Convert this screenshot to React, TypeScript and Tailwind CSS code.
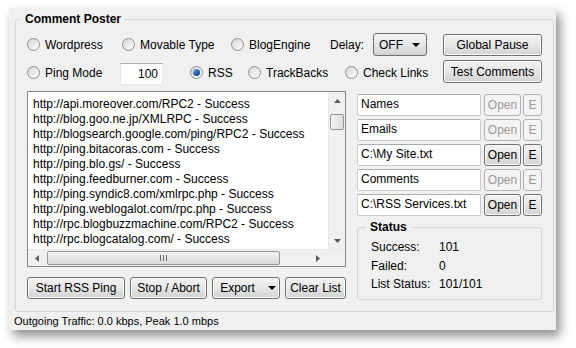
import React from 'react';

type RadioProps = { label: string; checked?: boolean; className?: string };

const Radio: React.FC<RadioProps> = ({ label, checked = false, className = '' }) => (
    <div className={`flex items-center gap-[5px] shrink-0 ${className}`}>
        <span className="w-[13px] h-[13px] rounded-full border border-[#8e8f8f] bg-gradient-to-br from-[#d6d6d6] to-[#fcfcfc] flex items-center justify-center shrink-0">
            {checked && <span className="w-[7px] h-[7px] rounded-full bg-gradient-to-br from-[#7fb8ec] via-[#2a6cb5] to-[#0b3a74]" />}
        </span>
        <span>{label}</span>
    </div>
);

type BtnProps = { children: React.ReactNode; className?: string; disabled?: boolean };

const Btn: React.FC<BtnProps> = ({ children, className = '', disabled = false }) => (
    <div
        className={`flex items-center justify-center rounded-[3px] border shrink-0 ${
            disabled
                ? 'border-[#adb2b5] bg-[#f4f4f4] text-[#9a9a9a]'
                : 'border-[#707070] bg-gradient-to-b from-[#f3f3f3] via-[#e6e6e6] to-[#d2d2d2] text-black shadow-[inset_0_0_0_1px_#fbfbfb]'
        } ${className}`}
    >
        {children}
    </div>
);

const Field: React.FC<{ text: string }> = ({ text }) => (
    <div className="w-[124px] h-[22px] bg-white border border-[#c9cdd2] border-t-[#abadb3] rounded-[2px] pl-[3px] leading-[18px]">
        {text}
    </div>
);

const files = [
    { text: 'Names', enabled: false },
    { text: 'Emails', enabled: false },
    { text: 'C:\\My Site.txt', enabled: true },
    { text: 'Comments', enabled: false },
    { text: 'C:\\RSS Services.txt', enabled: true },
];

const pings = [
    'http://api.moreover.com/RPC2 - Success',
    'http://blog.goo.ne.jp/XMLRPC - Success',
    'http://blogsearch.google.com/ping/RPC2 - Success',
    'http://ping.bitacoras.com - Success',
    'http://ping.blo.gs/ - Success',
    'http://ping.feedburner.com - Success',
    'http://ping.syndic8.com/xmlrpc.php - Success',
    'http://ping.weblogalot.com/rpc.php - Success',
    'http://rpc.blogbuzzmachine.com/RPC2 - Success',
    'http://rpc.blogcatalog.com/ - Success',
];

const Arrow: React.FC<{ dir: 'up' | 'down' | 'left' | 'right' }> = ({ dir }) => {
    const pts = {
        up: '0,4 7,4 3.5,0',
        down: '0,0 7,0 3.5,4',
        left: '4,0 4,7 0,3.5',
        right: '0,0 0,7 4,3.5',
    }[dir];
    const vertical = dir === 'up' || dir === 'down';
    return (
        <svg width={vertical ? 7 : 4} height={vertical ? 4 : 7} viewBox={vertical ? '0 0 7 4' : '0 0 4 7'}>
            <polygon points={pts} fill="#5a5a5a" />
        </svg>
    );
};

const App: React.FC = () => {
    return (
        <div className="w-[576px] h-[348px] bg-white pt-[8px] pl-[9px] font-['Liberation_Sans',Arial,sans-serif] text-[12px] text-black overflow-hidden">
            <div className="w-[547px] h-[322px] bg-[#f0f0f0] shadow-[4px_6px_10px_rgba(0,0,0,0.45)] flex flex-col">
                <fieldset className="ml-[6px] mt-[4px] w-[538px] h-[300px] border border-[#d5d5d5] rounded-[3px] px-[11px] pt-[6px]">
                    <legend className="ml-[-6px] px-[4px] font-bold leading-[15px]">Comment Poster</legend>

                    {/* row 1 */}
                    <div className="flex items-center h-[23px]">
                        <Radio label="Wordpress" className="w-[95px]" />
                        <Radio label="Movable Type" className="w-[109px]" />
                        <Radio label="BlogEngine" className="w-[99px]" />
                        <span className="w-[43px]">Delay:</span>
                        <div className="w-[54px] h-[23px] shrink-0 rounded-[3px] border border-[#707070] bg-gradient-to-b from-[#f3f3f3] via-[#e6e6e6] to-[#d2d2d2] flex items-center justify-between pl-[5px] pr-[6px]">
                            <span>OFF</span>
                            <svg width="8" height="4" viewBox="0 0 8 4"><polygon points="0,0 8,0 4,4" fill="#000" /></svg>
                        </div>
                        <Btn className="ml-auto w-[99px] h-[22px]">Global Pause</Btn>
                    </div>

                    {/* row 2 */}
                    <div className="flex items-center h-[25px] mt-[4px]">
                        <Radio label="Ping Mode" className="w-[93px]" />
                        <div className="w-[43px] h-[22px] mt-[3px] bg-white border border-[#e3e9ef] border-t-[#abadb3] text-right pr-[4px] leading-[20px]">100</div>
                        <Radio label="RSS" checked className="ml-[27px] w-[58px]" />
                        <Radio label="TrackBacks" className="w-[97px]" />
                        <Radio label="Check Links" />
                        <Btn className="ml-auto w-[99px] h-[23px] -mt-[2px]">Test Comments</Btn>
                    </div>

                    <div className="flex gap-[11px] mt-[6px]">
                        {/* left column */}
                        <div className="w-[319px] flex flex-col">
                            <div className="h-[176px] bg-white border border-[#828790] flex flex-col">
                                <div className="flex flex-1 min-h-0">
                                    <div className="flex-1 pl-[5px] pt-[5px] overflow-hidden whitespace-nowrap leading-[15px]">
                                        {pings.map(p => (
                                            <div key={p}>{p}</div>
                                        ))}
                                    </div>
                                    <div className="w-[17px] bg-[#f0f0f0] border-l border-[#e8e8e8] flex flex-col items-center">
                                        <div className="h-[17px] flex items-center justify-center"><Arrow dir="up" /></div>
                                        <div className="w-[14px] h-[16px] mt-[5px] rounded-[2px] border border-[#979797] bg-gradient-to-r from-[#f3f3f3] to-[#dcdcdc]" />
                                        <div className="mt-auto h-[17px] flex items-center justify-center"><Arrow dir="down" /></div>
                                    </div>
                                </div>
                                <div className="h-[17px] flex bg-[#f0f0f0] border-t border-[#e8e8e8]">
                                    <div className="w-[17px] flex items-center justify-center"><Arrow dir="left" /></div>
                                    <div className="flex-1 flex items-center pr-[2px]">
                                        <div className="ml-[2px] w-[233px] h-[14px] rounded-[2px] border border-[#979797] bg-gradient-to-b from-[#f3f3f3] to-[#d9d9d9] flex items-center justify-center gap-[2px]">
                                            <span className="w-[1px] h-[6px] bg-[#6a6a6a]" />
                                            <span className="w-[1px] h-[6px] bg-[#6a6a6a]" />
                                            <span className="w-[1px] h-[6px] bg-[#6a6a6a]" />
                                        </div>
                                        <div className="ml-auto w-[17px] flex items-center justify-center"><Arrow dir="right" /></div>
                                    </div>
                                    <div className="w-[17px] bg-[#f0f0f0]" />
                                </div>
                            </div>
                            <div className="flex gap-[5px] mt-[10px]">
                                <Btn className="w-[98px] h-[22px]">Start RSS Ping</Btn>
                                <Btn className="w-[77px] h-[22px]">Stop / Abort</Btn>
                                <Btn className="w-[68px] h-[22px] gap-[13px] pl-[4px]">
                                    <span>Export</span>
                                    <svg width="8" height="4" viewBox="0 0 8 4"><polygon points="0,0 8,0 4,4" fill="#000" /></svg>
                                </Btn>
                                <Btn className="w-[61px] h-[22px]">Clear List</Btn>
                            </div>
                        </div>

                        {/* right column */}
                        <div className="w-[185px] flex flex-col pt-[3px]">
                            <div className="flex flex-col gap-[3px]">
                                {files.map(f => (
                                    <div key={f.text} className="flex items-center gap-[2px]">
                                        <Field text={f.text} />
                                        <Btn disabled={!f.enabled} className="w-[37px] h-[22px] ml-[1px]">Open</Btn>
                                        <Btn disabled={!f.enabled} className="w-[19px] h-[22px]">E</Btn>
                                    </div>
                                ))}
                            </div>
                            <fieldset className="mt-[4px] h-[80px] border border-[#d5d5d5] rounded-[3px] pl-[13px] pt-[3px]">
                                <legend className="ml-[-5px] px-[4px] font-bold leading-[15px]">Status</legend>
                                <div className="grid grid-cols-[68px_1fr] leading-[18.5px]">
                                    <span>Success:</span><span>101</span>
                                    <span>Failed:</span><span>0</span>
                                    <span>List Status:</span><span>101/101</span>
                                </div>
                            </fieldset>
                        </div>
                    </div>
                </fieldset>
                <div className="ml-[5px] mt-[2px] text-[11px] leading-[14px]">Outgoing Traffic: 0.0 kbps, Peak 1.0 mbps</div>
            </div>
        </div>
    );
};

export default App;
